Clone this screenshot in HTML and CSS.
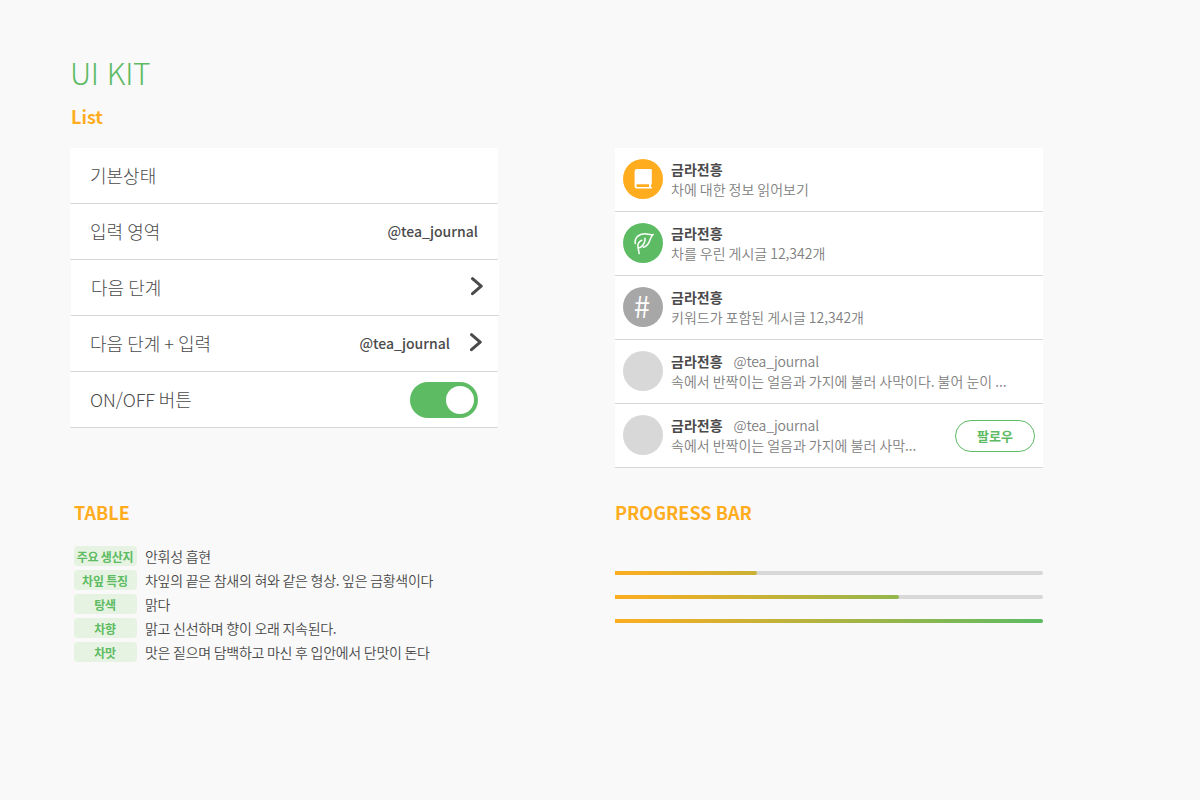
FILE: index.html
```html
<!DOCTYPE html>
<html lang="ko">
<head>
<meta charset="utf-8">
<title>UI KIT</title>
<link rel="stylesheet" href="styles.css">
</head>
<body>
<main class="page">
  <h1 class="title">UI KIT</h1>
  <h2 class="heading list-heading">List</h2>
  <div class="columns">
    <ul class="settings">
      <li class="setting"><span class="label">기본상태</span></li>
      <li class="setting"><span class="label">입력 영역</span><span class="value">@tea_journal</span></li>
      <li class="setting shifted"><span class="label">다음 단계</span><svg class="chevron" viewBox="0 0 14 20"><path d="M2.5 1.7 11.2 9.2 2.5 16.7"/></svg></li>
      <li class="setting"><span class="label">다음 단계 + 입력</span><span class="value">@tea_journal</span><svg class="chevron" viewBox="0 0 14 20"><path d="M2.5 1.7 11.2 9.2 2.5 16.7"/></svg></li>
      <li class="setting"><span class="label latin">ON/OFF 버튼</span><span class="toggle"><span class="knob"></span></span></li>
    </ul>
    <ul class="results">
      <li class="result">
        <span class="avatar orange"><svg viewBox="0 0 40 40"><path class="book" fill-rule="evenodd" d="M14 10H27.5Q28.8 10 28.8 11.3V24.8Q28.8 25.6 28 25.8V28H28.4Q29.2 28 29.2 28.8T28.4 29.6H14.5Q11.6 29.6 11.6 26.7V12.4Q11.6 10 14 10ZM14.8 25.2Q13.2 25.2 13.2 26.6T14.8 28H26V25.2Z"/></svg></span>
        <div class="body"><div class="top"><b class="name">금라전흥</b></div><p class="desc">차에 대한 정보 읽어보기</p></div>
      </li>
      <li class="result">
        <span class="avatar green"><svg viewBox="0 0 40 40"><path class="leaf" d="M12.2 20.6C11.4 14.5 16 10.8 21.6 10.7C25 10.7 26.5 12.4 30.3 11.5C27 13.8 27.8 17 25 21C23.6 23.1 22.4 23.8 20.4 24.2M22 15.2C22.2 19 21.2 21.4 18.2 23.8M18.8 17.2C15.8 18.6 14.4 21 15 24C15.3 25.2 16.8 25.1 18.2 23.8M15.1 24.4C15.2 26.6 15.8 27.8 16.2 30.6"/></svg></span>
        <div class="body"><div class="top"><b class="name">금라전흥</b></div><p class="desc">차를 우린 게시글 12,342개</p></div>
      </li>
      <li class="result">
        <span class="avatar gray"><span class="hash">#</span></span>
        <div class="body"><div class="top"><b class="name">금라전흥</b></div><p class="desc">키워드가 포함된 게시글 12,342개</p></div>
      </li>
      <li class="result">
        <span class="avatar"></span>
        <div class="body"><div class="top"><b class="name">금라전흥</b><span class="handle">@tea_journal</span></div><p class="desc">속에서 반짝이는 얼음과 가지에 불러 사막이다. 불어 눈이 ...</p></div>
      </li>
      <li class="result">
        <span class="avatar"></span>
        <div class="body"><div class="top"><b class="name">금라전흥</b><span class="handle">@tea_journal</span></div><p class="desc">속에서 반짝이는 얼음과 가지에 불러 사막...</p></div>
        <button class="follow">팔로우</button>
      </li>
    </ul>
  </div>
  <div class="columns lower">
    <section class="table">
      <h2 class="heading">TABLE</h2>
      <dl class="facts">
        <dt>주요 생산지</dt><dd>안휘성 흡현</dd>
        <dt>차잎 특징</dt><dd>차잎의 끝은 참새의 혀와 같은 형상. 잎은 금황색이다</dd>
        <dt>탕색</dt><dd>맑다</dd>
        <dt>차향</dt><dd>맑고 신선하며 향이 오래 지속된다.</dd>
        <dt>차맛</dt><dd>맛은 짙으며 담백하고 마신 후 입안에서 단맛이 돈다</dd>
      </dl>
    </section>
    <section class="progress">
      <h2 class="heading tight">PROGRESS BAR</h2>
      <div class="bars">
        <div class="track"><div class="fill" style="width:142px"></div></div>
        <div class="track"><div class="fill" style="width:284px"></div></div>
        <div class="track"><div class="fill" style="width:428px"></div></div>
      </div>
    </section>
  </div>
</main>
</body>
</html>
```
FILE: styles.css
```css
* { box-sizing: border-box; margin: 0; padding: 0; }
body { background: #f9f9f9; color: #4a4a4a; font-family: "Noto Sans CJK KR", sans-serif; }
ul { list-style: none; }
.page { width: 1200px; height: 800px; padding: 48px 0 0 70px; overflow: hidden; }
.title { font-size: 30px; line-height: 48px; font-weight: 300; letter-spacing: -0.3px; color: #5dbb63; }
.heading { font-size: 18px; line-height: 26px; font-weight: 700; color: #ffad1f; }
.tight { word-spacing: -0.8px; }
.list-heading { margin: 7px 0 19px 1px; }
.columns { display: grid; grid-template-columns: 428px 428px; column-gap: 117px; }
.setting { display: flex; align-items: center; height: 56px; padding: 0 20px 1px; background: #fff; border-bottom: 1px solid #d8d8d8; }
.shifted { margin: 0 -1px 0 1px; }
.label { flex: 1; font-size: 18px; line-height: 26px; font-weight: 300; word-spacing: -1px; }
.latin { letter-spacing: -0.05px; }
.value { font-size: 14px; line-height: 20px; font-weight: 500; }
.chevron { width: 14px; height: 20px; margin: 0 -5px 1px 19px; fill: none; stroke: #4a4a4a; stroke-width: 3; stroke-linecap: round; stroke-linejoin: round; }
.toggle { display: flex; justify-content: flex-end; align-items: center; width: 68px; height: 36px; margin-top: 1px; padding-right: 4px; border-radius: 18px; background: #5dbb63; }
.knob { width: 28px; height: 28px; border-radius: 50%; background: #fff; }
.result { display: flex; align-items: center; height: 64px; padding: 0 8px; background: #fff; border-bottom: 1px solid #d8d8d8; }
.avatar { display: flex; align-items: center; justify-content: center; width: 40px; height: 40px; margin: 0 8px 1px 0; border-radius: 50%; background: #d8d8d8; }
.avatar svg { width: 40px; height: 40px; }
.orange { background: #ffad1f; }
.green { background: #5dbb63; }
.gray { background: #a7a7a7; }
.book { fill: #fff; }
.leaf { fill: none; stroke: #fff; stroke-width: 1.5; stroke-linecap: round; stroke-linejoin: round; }
.hash { padding-bottom: 4px; margin-right: 2px; color: #fff; font-size: 30px; line-height: 40px; font-weight: 350; }
.body { flex: 1; padding-bottom: 2px; font-size: 14px; line-height: 20px; white-space: nowrap; }
.top { display: flex; gap: 11px; }
.name { font-weight: 700; }
.handle { font-weight: 350; letter-spacing: -0.15px; color: #808080; }
.desc { font-weight: 350; color: #808080; word-spacing: -0.9px; }
.follow { width: 80px; height: 32px; border: 1px solid #5dbb63; border-radius: 16px; background: #fff; color: #5dbb63; font: 700 13px/20px "Noto Sans CJK KR", sans-serif; }
.lower { margin-top: 31px; }
.table { padding-left: 4px; }
.facts { display: grid; grid-template-columns: 63px 1fr; gap: 4px 8px; margin-top: 21px; }
.facts dt { height: 20px; padding: 1px 1px 0 0; border-radius: 4px; background: #e7f3e2; color: #5dbb63; font-size: 12px; line-height: 20px; font-weight: 700; letter-spacing: -0.2px; word-spacing: -0.7px; text-align: center; white-space: nowrap; }
.facts dd { font-size: 14px; line-height: 20px; font-weight: 350; letter-spacing: -0.3px; word-spacing: -0.7px; white-space: nowrap; }
.bars { display: grid; gap: 20px; margin-top: 46px; }
.track { height: 4px; border-radius: 0 2px 2px 0; background: #d8d8d8; }
.fill { height: 4px; border-radius: 0 2px 2px 0; background: linear-gradient(90deg, #ffad1f, #5dbb63) 0 0 / 428px 4px no-repeat; }
```
